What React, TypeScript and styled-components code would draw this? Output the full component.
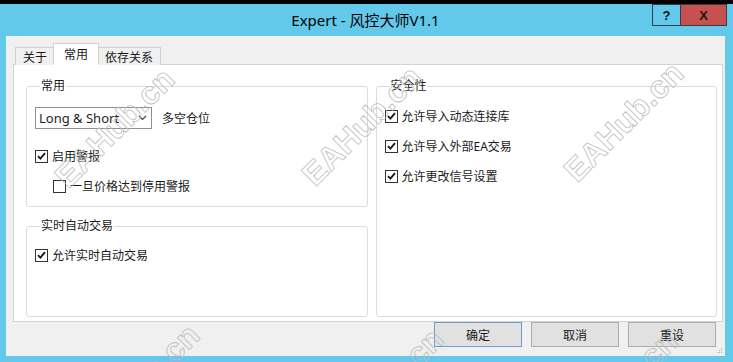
import React from 'react';
import styled, { createGlobalStyle } from 'styled-components';

const GlobalStyle = createGlobalStyle`
  html, body {
    margin: 0;
    padding: 0;
    background: #000;
  }
  * {
    box-sizing: border-box;
  }
`;

const UI_FONT = `"Noto Sans", "Noto Sans CJK SC", sans-serif`;

const Page = styled.div`
  position: relative;
  width: 733px;
  height: 362px;
  padding-top: 4px;
  background: #000;
  overflow: hidden;
  font-family: ${UI_FONT};
  color: #1a1a1a;
`;

const Window = styled.div`
  height: 358px;
  display: flex;
  flex-direction: column;
  background: #62c9ea;
  padding: 0 8px 6px 6px;
`;

const TitleBar = styled.div`
  height: 32px;
  display: grid;
  grid-template-columns: 1fr auto 1fr;
  align-items: start;
`;

const Title = styled.div`
  grid-column: 2;
  line-height: 32px;
  font-size: 15px;
  color: #000;
`;

const Controls = styled.div`
  justify-self: end;
  display: flex;
  margin-right: -2px;
`;

const HelpButton = styled.div`
  width: 29px;
  height: 22px;
  border: 1px solid #2b3f4c;
  display: flex;
  align-items: center;
  justify-content: center;
  font: bold 13px "Liberation Sans", sans-serif;
  color: #111;
`;

const CloseButton = styled.div`
  width: 46px;
  height: 22px;
  background: #c75050;
  border: 1px solid #3b3b3b;
  border-left: none;
  display: flex;
  align-items: center;
  justify-content: center;
  font: bold 13px "Liberation Sans", sans-serif;
  color: #1a1a1a;
`;

const Client = styled.div`
  position: relative;
  flex: 1;
  background: #f0f0f0;
  padding: 7px 2px 0 7px;
  display: flex;
  flex-direction: column;
`;

const TabStrip = styled.div`
  position: relative;
  z-index: 1;
  height: 22px;
  display: flex;
  align-items: flex-end;
  padding-left: 2px;
  margin-bottom: -1px;
`;

const Tab = styled.div<{ $active?: boolean }>`
  height: ${(p) => (p.$active ? '22px' : '18px')};
  padding: 0 ${(p) => (p.$active ? '10px' : '7px')};
  margin: 0 ${(p) => (p.$active ? '-2px' : '0')};
  position: relative;
  z-index: ${(p) => (p.$active ? 2 : 1)};
  display: flex;
  align-items: center;
  font-size: 12px;
  background: ${(p) => (p.$active ? '#fff' : '#f0f0f0')};
  border: 1px solid #d0d0d0;
  border-bottom: ${(p) => (p.$active ? '1px solid #fff' : 'none')};
  color: #1a1a1a;
`;

const Panel = styled.div`
  height: 258px;
  background: #fff;
  border: 1px solid #d3d3d3;
  padding: 14px 5px 4px 12px;
  display: grid;
  grid-template-columns: 1fr 1fr;
  column-gap: 8px;
`;

const Column = styled.div`
  display: grid;
  grid-template-rows: 128px 1fr;
  row-gap: 12px;
`;

const Group = styled.fieldset`
  margin: 0;
  min-width: 0;
  padding: 14px 8px 6px 8px;
  border: 1px solid #dcdcdc;
  border-radius: 3px;
  display: flex;
  flex-direction: column;
  align-items: flex-start;
`;

const Legend = styled.legend`
  margin-left: 5px;
  padding: 0 1px;
  font-size: 12px;
  line-height: 14px;
  color: #1a1a1a;
`;

const ComboRow = styled.div`
  display: flex;
  align-items: center;
  gap: 10px;
  font-size: 12px;
`;

const Combo = styled.div`
  width: 117px;
  height: 22px;
  border: 1px solid #8f8f8f;
  background: #fff;
  display: flex;
  align-items: center;
  justify-content: space-between;
  padding: 0 4px 0 3px;
  font-size: 13px;
  color: #1e1e1e;
`;

const CheckRow = styled.label<{ $indent?: number; $gap?: number }>`
  display: flex;
  align-items: center;
  gap: 4px;
  height: 16px;
  margin-left: ${(p) => p.$indent ?? 0}px;
  margin-top: ${(p) => p.$gap ?? 0}px;
  font-size: 12px;
  color: #1a1a1a;
`;

const Box = styled.span`
  width: 13px;
  height: 13px;
  border: 1px solid #333;
  background: #fff;
  display: flex;
  align-items: center;
  justify-content: center;
`;

const ButtonRow = styled.div`
  display: flex;
  justify-content: flex-end;
  gap: 9px;
  padding-right: 7px;
`;

const Button = styled.div<{ $default?: boolean }>`
  width: 88px;
  height: 25px;
  background: #e1e1e1;
  border: 1px solid ${(p) => (p.$default ? '#6c9fd6' : '#adadad')};
  display: flex;
  align-items: center;
  justify-content: center;
  font-size: 12px;
  color: #1a1a1a;
`;

const Grip = styled.svg`
  position: absolute;
  right: 2px;
  bottom: 2px;
`;

const Watermarks = styled.div`
  position: absolute;
  inset: 0;
  pointer-events: none;
  overflow: hidden;
`;

const Mark = styled.span<{ $x: number; $y: number }>`
  position: absolute;
  left: ${(p) => p.$x}px;
  top: ${(p) => p.$y}px;
  transform: translate(-50%, -50%) rotate(-45deg);
  font: bold 32px "Liberation Sans", sans-serif;
  color: transparent;
  -webkit-text-stroke: 0.8px #bdbdbd;
  white-space: nowrap;
`;

function Check({ checked }: { checked?: boolean }) {
  return (
    <Box>
      {checked && (
        <svg width="9" height="8" viewBox="0 0 9 8">
          <path d="M1 4.2 L3.4 6.6 L8 1.2" fill="none" stroke="#1a1a1a" strokeWidth="1.9" />
        </svg>
      )}
    </Box>
  );
}

const marks = [
  { x: 115, y: 128 },
  { x: 362, y: 126 },
  { x: 624, y: 122 },
  { x: 140, y: 384 },
  { x: 384, y: 388 },
  { x: 618, y: 390 },
];

export default function App() {
  return (
    <Page>
      <GlobalStyle />
      <Window>
        <TitleBar>
          <Title>Expert - 风控大师V1.1</Title>
          <Controls>
            <HelpButton>?</HelpButton>
            <CloseButton>X</CloseButton>
          </Controls>
        </TitleBar>
        <Client>
          <TabStrip>
            <Tab>关于</Tab>
            <Tab $active>常用</Tab>
            <Tab>依存关系</Tab>
          </TabStrip>
          <Panel>
            <Column>
              <Group>
                <Legend>常用</Legend>
                <ComboRow>
                  <Combo>
                    Long &amp; Short
                    <svg width="9" height="6" viewBox="0 0 9 6">
                      <path d="M1 1 L4.5 4.5 L8 1" fill="none" stroke="#444" strokeWidth="1.2" />
                    </svg>
                  </Combo>
                  多空仓位
                </ComboRow>
                <CheckRow $gap={19}>
                  <Check checked />
                  启用警报
                </CheckRow>
                <CheckRow $gap={14} $indent={18}>
                  <Check />
                  一旦价格达到停用警报
                </CheckRow>
              </Group>
              <Group>
                <Legend>实时自动交易</Legend>
                <CheckRow>
                  <Check checked />
                  允许实时自动交易
                </CheckRow>
              </Group>
            </Column>
            <Group>
              <Legend>安全性</Legend>
              <CheckRow $gap={1}>
                <Check checked />
                允许导入动态连接库
              </CheckRow>
              <CheckRow $gap={14}>
                <Check checked />
                允许导入外部EA交易
              </CheckRow>
              <CheckRow $gap={14}>
                <Check checked />
                允许更改信号设置
              </CheckRow>
            </Group>
          </Panel>
          <ButtonRow>
            <Button $default>确定</Button>
            <Button>取消</Button>
            <Button>重设</Button>
          </ButtonRow>
          <Grip width="6" height="6" viewBox="0 0 6 6">
            <rect x="4" y="0" width="1" height="1" fill="#b0b0b0" />
            <rect x="2" y="2" width="1" height="1" fill="#b0b0b0" />
            <rect x="4" y="2" width="1" height="1" fill="#b0b0b0" />
            <rect x="0" y="4" width="1" height="1" fill="#b0b0b0" />
            <rect x="2" y="4" width="1" height="1" fill="#b0b0b0" />
            <rect x="4" y="4" width="1" height="1" fill="#b0b0b0" />
          </Grip>
        </Client>
      </Window>
      <Watermarks>
        {marks.map((m, i) => (
          <Mark key={i} $x={m.x} $y={m.y}>
            EAHub.cn
          </Mark>
        ))}
      </Watermarks>
    </Page>
  );
}
